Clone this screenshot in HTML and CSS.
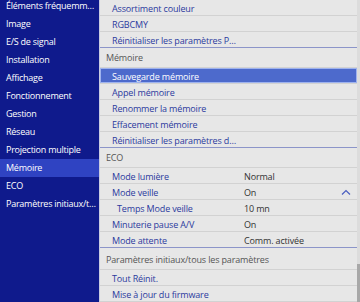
FILE: index.html
```html
<!doctype html>
<html lang="fr">
 <head>
  <meta charset="UTF-8">
  <title>Menu projecteur - Mémoire</title>
  <meta name="viewport" content="width=device-width, initial-scale=1.0">
  <link rel="stylesheet" href="styles.css">
 </head>
 <body>
  <nav class="sidebar">
   <ul class="side-list">
    <li>Éléments fréquemment utilisés</li>
    <li>Image</li>
    <li>E/S de signal</li>
    <li>Installation</li>
    <li>Affichage</li>
    <li>Fonctionnement</li>
    <li>Gestion</li>
    <li>Réseau</li>
    <li>Projection multiple</li>
    <li class="active">Mémoire</li>
    <li>ECO</li>
    <li>Paramètres initiaux/tous les paramètres</li>
   </ul>
  </nav>
  <main class="panel">
   <div class="list">
    <div class="row"><span class="label">Assortiment couleur</span></div>
    <div class="row"><span class="label">RGBCMY</span></div>
    <div class="row last"><span class="label">Réinitialiser les paramètres Passerelle</span></div>

    <div class="head">Mémoire</div>
    <div class="row selected"><span class="label">Sauvegarde mémoire</span></div>
    <div class="row"><span class="label">Appel mémoire</span></div>
    <div class="row"><span class="label">Renommer la mémoire</span></div>
    <div class="row"><span class="label">Effacement mémoire</span></div>
    <div class="row last"><span class="label">Réinitialiser les paramètres de mémoire</span></div>

    <div class="head">ECO</div>
    <div class="row"><span class="label">Mode lumière</span><span class="value">Normal</span></div>
    <div class="row"><span class="label">Mode veille</span><span class="value">On</span>
     <svg class="chevron" width="10" height="6" viewBox="0 0 10 6"><path d="M1 5.5 L5 1.5 L9 5.5" fill="none" stroke="#4a5ec0" stroke-width="1.2"/></svg>
    </div>
    <div class="row"><span class="label sub">Temps Mode veille</span><span class="value">10 mn</span></div>
    <div class="row"><span class="label">Minuterie pause A/V</span><span class="value">On</span></div>
    <div class="row last"><span class="label">Mode attente</span><span class="value">Comm. activée</span></div>

    <div class="head tall">Paramètres initiaux/tous les paramètres</div>
    <div class="row"><span class="label">Tout Réinit.</span></div>
    <div class="row"><span class="label">Mise à jour du firmware</span></div>
   </div>
   <div class="scrollbar"><div class="thumb"></div></div>
  </main>
 </body>
</html>
```

FILE: styles.css
```css
:root {
  --side-bg: #0f1a8c;
  --side-active: #2f43c2;
  --panel-bg: #e7e7e7;
  --line: #d2d2d2;
  --section-line: #8c95c9;
  --item-color: #2b3a9e;
  --head-color: #555;
  --select-bg: #4d6acc;
}

body {
  margin: 0;
  height: 302px;
  overflow: hidden;
  display: flex;
  font-family: 'Open Sans', 'Noto Sans', sans-serif;
  font-size: 9px;
  letter-spacing: -0.15px;
  background-color: var(--panel-bg);
}

.sidebar {
  width: 99px;
  flex-shrink: 0;
  background-color: var(--side-bg);
  color: #fff;
  overflow: hidden;
  letter-spacing: -0.25px;
}

.side-list {
  list-style: none;
  margin: -3px 0 0;
  padding: 0;
}

.side-list li {
  height: 18px;
  line-height: 18px;
  padding: 0 0 0 6px;
  white-space: nowrap;
  overflow: hidden;
  text-overflow: ellipsis;
}

.side-list li.active {
  background-color: var(--side-active);
}

.panel {
  flex: 1;
  display: flex;
  border-left: 1px solid #c9cbe0;
  min-width: 0;
}

.list {
  flex: 1;
  min-width: 0;
}

.row {
  display: flex;
  align-items: center;
  height: 14px;
  padding-top: 1px;
  border-bottom: 1px solid var(--line);
  color: var(--item-color);
  position: relative;
}

.row.last {
  border-bottom-color: var(--section-line);
}

.label {
  width: 128px;
  flex-shrink: 0;
  padding-left: 12px;
  white-space: nowrap;
  overflow: hidden;
  text-overflow: ellipsis;
}

.label.sub {
  padding-left: 17px;
  width: 123px;
}

.value {
  margin-left: 4px;
  color: #333;
}

.chevron {
  position: absolute;
  right: 6px;
  top: 5px;
}

.row.selected {
  background-color: var(--select-bg);
  color: #fff;
  box-shadow: inset 0 0 0 1px #9fb3ee;
}

.head {
  height: 19px;
  line-height: 20px;
  padding-left: 6px;
  color: var(--head-color);
  border-bottom: 1px solid var(--line);
  white-space: nowrap;
}

.head.tall {
  height: 21px;
  line-height: 23px;
}

.scrollbar {
  width: 3px;
  flex-shrink: 0;
  background-color: #dcdcdc;
  display: flex;
  flex-direction: column;
}

.thumb {
  margin-top: auto;
  height: 38px;
  background-color: #a8a8a8;
}
```
